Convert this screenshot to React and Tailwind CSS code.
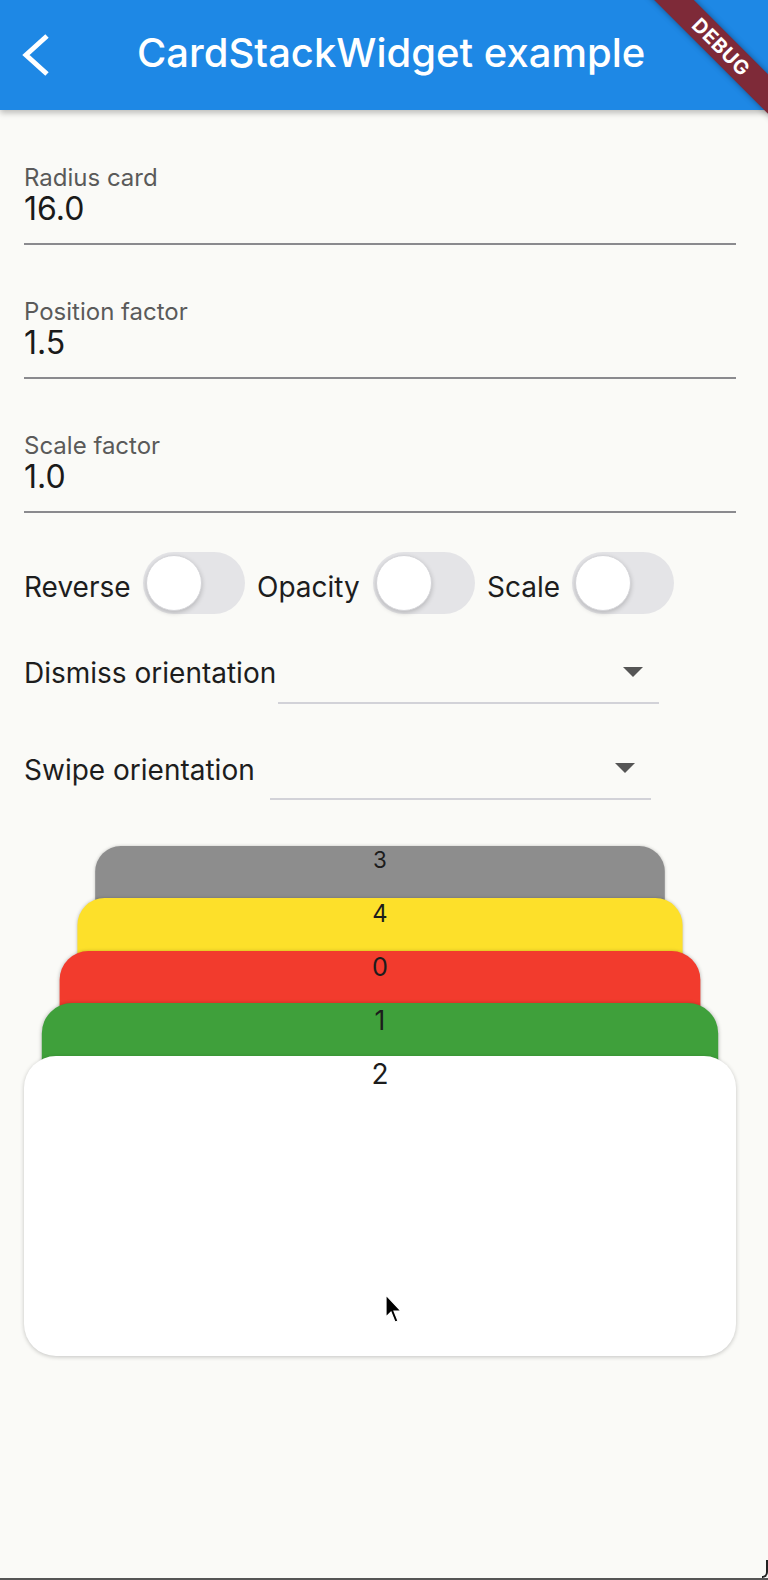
import React from "react";

const fields = [
  { label: "Radius card", value: "16.0" },
  { label: "Position factor", value: "1.5" },
  { label: "Scale factor", value: "1.0" },
];

const cards = [
  { n: "3", color: "bg-[#8d8d8d]", pos: "top-[0px] scale-[0.8]" },
  { n: "4", color: "bg-[#fde02a]", pos: "top-[52px] scale-[0.85]" },
  { n: "0", color: "bg-[#f23b2d]", pos: "top-[105px] scale-[0.9]" },
  { n: "1", color: "bg-[#3fa03b]", pos: "top-[157px] scale-[0.95]" },
  { n: "2", color: "bg-white", pos: "top-[210px] scale-100" },
];

const Switch = () => (
  <div className="relative w-[102px] h-[62px] shrink-0 rounded-full bg-[#e4e4e7]">
    <div className="absolute left-[3px] top-[3px] w-[56px] h-[56px] rounded-full bg-white border border-[#d4d4d8] shadow-[0_2px_5px_rgba(0,0,0,0.2)]" />
  </div>
);

const Dropdown = ({ label, textWidth, mt }) => (
  <div className="flex items-start">
    <span className={`${textWidth} ${mt} shrink-0 text-[28px] leading-[28px] text-[#1d1d1d]`}>{label}</span>
    <div className="w-[381px] flex flex-col">
      <div className="h-[48px] flex justify-end pr-[2px]">
        <svg width="48" height="48" viewBox="0 0 24 24">
          <path d="M7 10l5 5 5-5z" fill="#555" />
        </svg>
      </div>
      <div className="mt-[7px] h-[2px] bg-[#d2d2d8]" />
    </div>
  </div>
);

export default function App() {
  return (
    <div
      className="relative w-[768px] h-[1580px] overflow-hidden bg-[#fafaf7] border-b-2 border-[#555]"
      style={{ fontFamily: "Inter, 'Noto Sans', sans-serif" }}
    >
      {/* app bar */}
      <header className="relative z-10 h-[110px] bg-[#1e88e5] flex items-center shadow-[0_3px_6px_rgba(0,0,0,0.25)]">
        <svg className="ml-[21px] shrink-0" width="30" height="44" viewBox="0 0 30 44">
          <polyline points="26,3 5,22 26,41" fill="none" stroke="white" strokeWidth="5" />
        </svg>
        <h1 className="ml-[86px] mb-[5px] text-[40px] leading-[40px] font-medium text-white">
          CardStackWidget example
        </h1>
      </header>

      {/* debug banner */}
      <div className="absolute z-20 left-[621px] top-[33px] w-[200px] h-[28px] rotate-45 bg-[#7e2a38] shadow-[0_0_6px_rgba(0,0,0,0.4)] flex items-center justify-center">
        <span className="text-white text-[20px] font-bold tracking-[0.5px] leading-none">DEBUG</span>
      </div>

      <main className="pl-[24px] pr-[32px]">
        {fields.map((f, i) => (
          <div key={f.label} className={i === 0 ? "mt-[56px]" : "mt-[55px]"}>
            <div className="text-[24px] leading-[24px] text-[#5a5a5a]">{f.label}</div>
            <div className="mt-[3px] text-[32px] leading-[32px] text-[#1a1a1a]">{f.value}</div>
            <div className="mt-[18px] h-[2px] bg-[#8a8a8e]" />
          </div>
        ))}

        <div className="mt-[39px] flex items-center h-[62px]">
          <span className="mt-[7px] w-[119px] shrink-0 text-[28px] text-[#1d1d1d]">Reverse</span>
          <Switch />
          <span className="mt-[7px] ml-[12px] w-[116px] shrink-0 text-[28px] text-[#1d1d1d]">Opacity</span>
          <Switch />
          <span className="mt-[7px] ml-[12px] w-[85px] shrink-0 text-[28px] text-[#1d1d1d]">Scale</span>
          <Switch />
        </div>

        <div className="mt-[33px]">
          <Dropdown label="Dismiss orientation" textWidth="w-[254px]" mt="mt-[12px]" />
        </div>
        <div className="mt-[39px]">
          <Dropdown label="Swipe orientation" textWidth="w-[246px]" mt="mt-[13px]" />
        </div>

        {/* card stack */}
        <div className="relative mt-[46px] h-[510px]">
          {cards.map((c) => (
            <div
              key={c.n}
              className={`absolute left-0 w-[712px] h-[300px] origin-top rounded-[32px] ${c.color} ${c.pos} shadow-[0_1px_4px_rgba(0,0,0,0.22)] flex justify-center pt-[4px]`}
            >
              <span className="text-[28px] leading-[28px] text-[#1c1c1c]">{c.n}</span>
            </div>
          ))}
        </div>
      </main>

      {/* mouse pointer */}
      <svg className="absolute left-[384px] top-[1293px]" width="22" height="32" viewBox="0 0 22 32">
        <path d="M2 2 L2 24 L7 19 L11 29 L14 28 L10 18 L17 18 Z" fill="#000" stroke="#fff" strokeWidth="1.2" />
      </svg>

      <div className="absolute right-0 bottom-0 w-[6px] h-[18px] border-r-2 border-b-2 border-[#222] rounded-br-[10px]" />
    </div>
  );
}
